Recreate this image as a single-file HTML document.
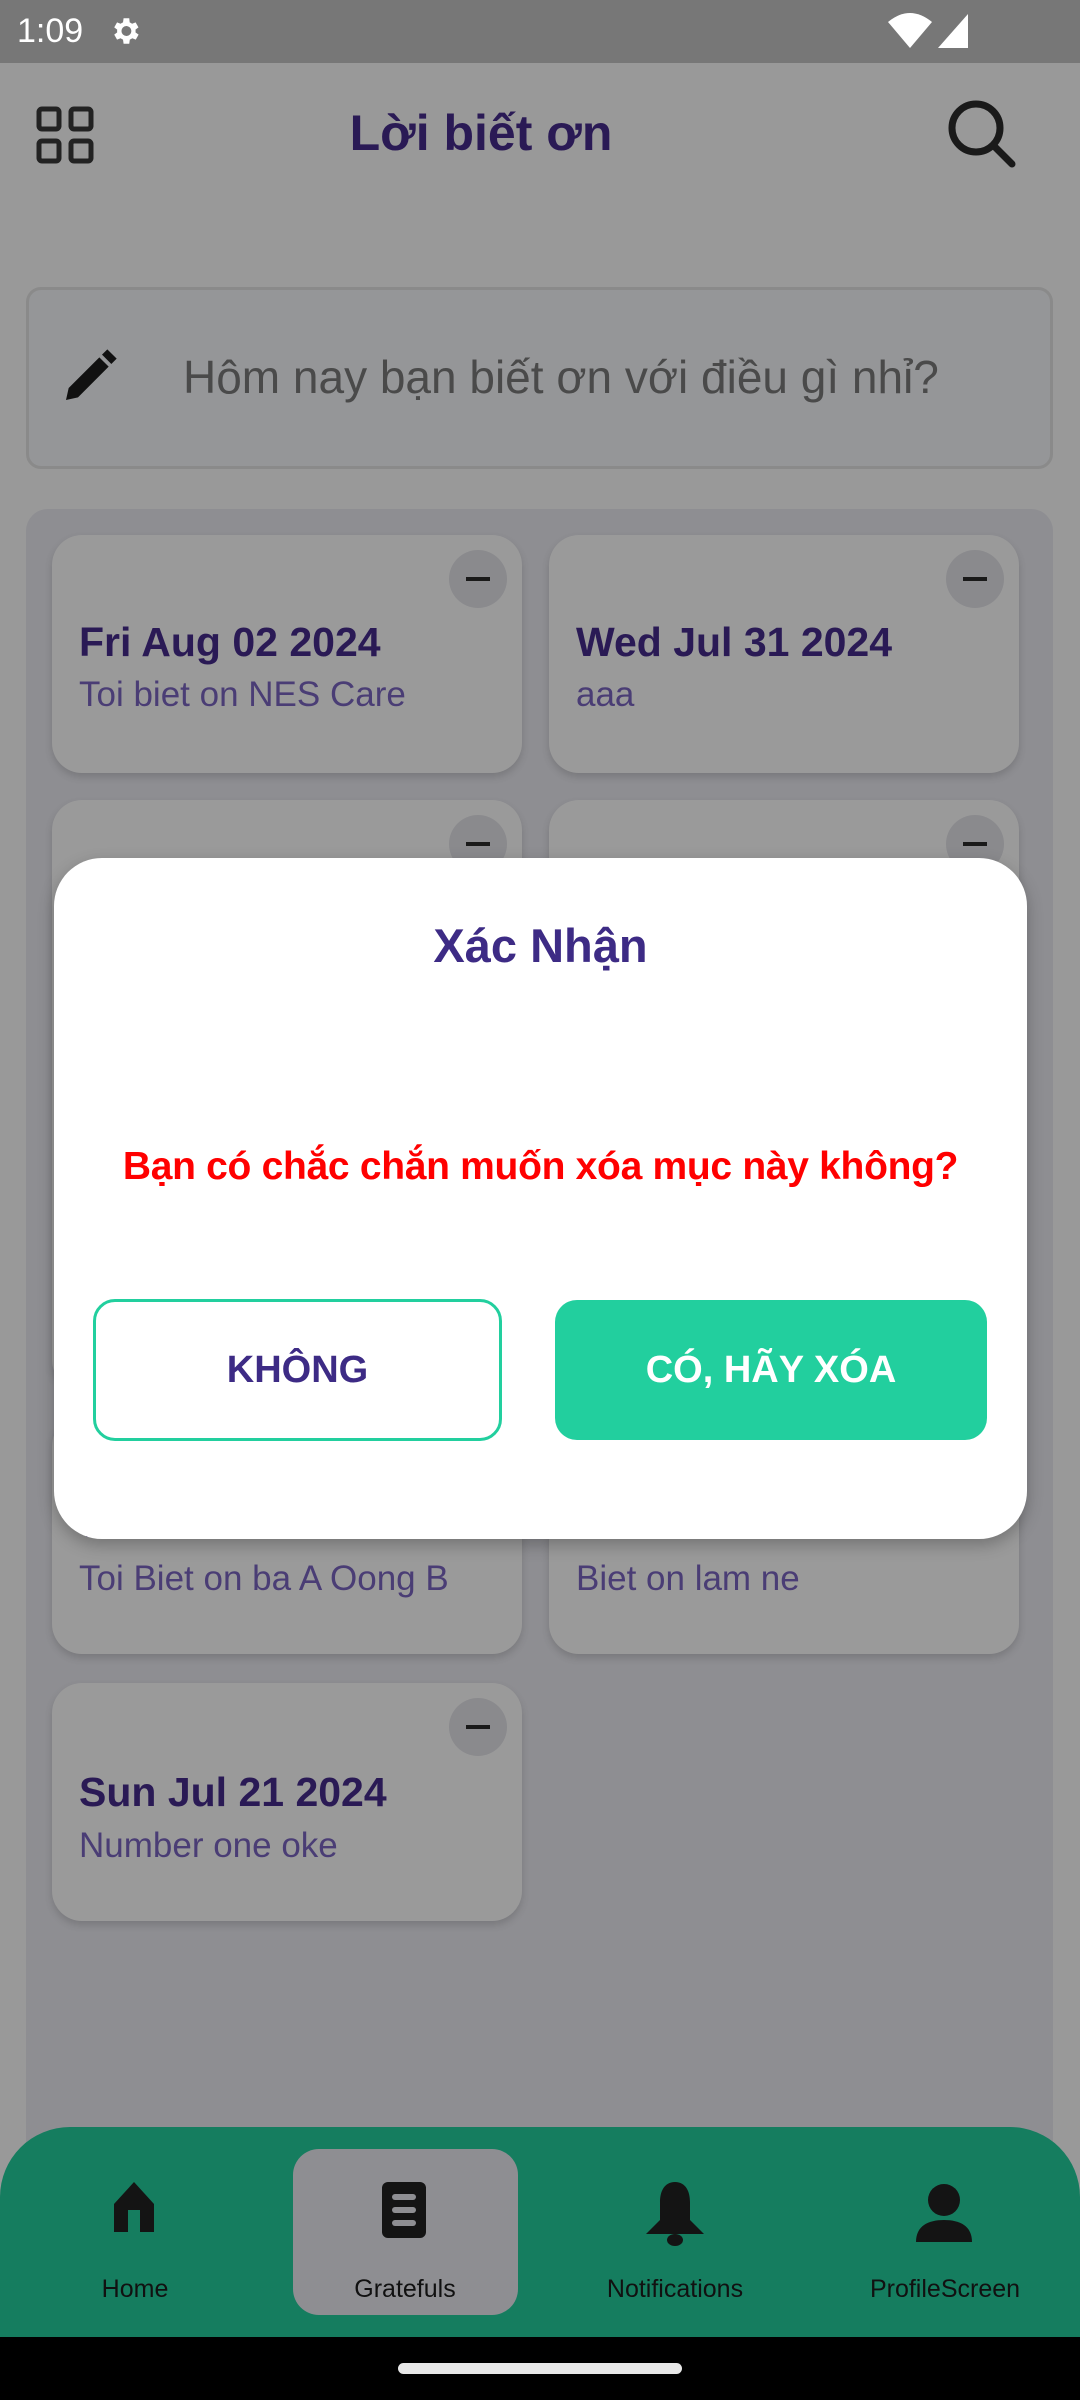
<!DOCTYPE html>
<html><head><meta charset="utf-8"><style>
*{margin:0;padding:0;box-sizing:border-box}
body{width:1080px;height:2400px;background:#999999;position:relative;overflow:hidden;font-family:"Liberation Sans","Noto Sans CJK SC",sans-serif}
.abs{position:absolute}
.card{position:absolute;background:#9a9a9a;border-radius:30px;box-shadow:0 4px 8px rgba(0,0,0,.15)}
.minus{position:absolute;right:15px;top:15px;width:58px;height:58px;border-radius:50%;background:#8a8a8d}
.minus:after{content:"";position:absolute;left:17px;top:27px;width:24px;height:4px;background:#1a1a1a}
.d{position:absolute;left:27px;font-weight:bold;font-size:41px;color:#2a1a55}
.s{position:absolute;left:27px;font-size:35px;color:#4a3d75}
.lab{position:absolute;top:2275px;font-size:25px;color:#111;width:270px;text-align:center}
</style></head><body>
<div class="abs" style="left:0;top:0;width:1080px;height:63px;background:#777"></div>
<div class="abs" style="left:17px;top:12px;font-size:34px;color:#fff">1:09</div>
<svg class="abs" style="left:108px;top:14px" width="34" height="34" viewBox="0 0 24 24"><path fill="#fff" d="M19.4 13a7.5 7.5 0 0 0 0-2l2.1-1.6-2-3.5-2.5 1a7 7 0 0 0-1.7-1L15 3h-4l-.4 2.9a7 7 0 0 0-1.7 1l-2.5-1-2 3.5L6.5 11a7.5 7.5 0 0 0 0 2l-2.1 1.6 2 3.5 2.5-1a7 7 0 0 0 1.7 1L11 21h4l.4-2.9a7 7 0 0 0 1.7-1l2.5 1 2-3.5zM13 15.5a3.5 3.5 0 1 1 0-7 3.5 3.5 0 0 1 0 7z"/></svg>
<svg class="abs" style="left:888px;top:12px" width="44" height="36" viewBox="0 0 44 36"><path fill="#fff" d="M0 10Q22-8 44 10L22 36z"/></svg>
<svg class="abs" style="left:938px;top:14px" width="30" height="34" viewBox="0 0 30 34"><path fill="#fff" d="M30 0V34H0z"/></svg>
<svg class="abs" style="left:36px;top:106px" width="60" height="60" viewBox="0 0 60 60" fill="none" stroke="#222" stroke-width="5"><rect x="3" y="3" width="20" height="20" rx="3"/><rect x="35" y="3" width="20" height="20" rx="3"/><rect x="3" y="35" width="20" height="20" rx="3"/><rect x="35" y="35" width="20" height="20" rx="3"/></svg>
<div class="abs" style="left:0;width:962px;top:104px;text-align:center;font-size:50px;font-weight:bold;color:#2a1a55">Lời biết ơn</div>
<svg class="abs" style="left:946px;top:98px" width="72" height="72" viewBox="0 0 72 72" fill="none" stroke="#1a1a1a" stroke-width="7"><circle cx="30" cy="30" r="24"/><path d="M48 48L66 66" stroke-linecap="round"/></svg>
<div class="abs" style="left:26px;top:287px;width:1027px;height:182px;background:#959698;border:3px solid #8a8a8a;border-radius:15px"></div>
<svg class="abs" style="left:58px;top:344px" width="64" height="64" viewBox="0 0 24 24"><path fill="#111" d="M3 21l1-4.5L15.5 5l3.5 3.5L7.5 20zM16.5 4l2-2 3.5 3.5-2 2z"/></svg>
<div class="abs" style="left:183px;top:350px;font-size:46px;color:#4a4a4a">Hôm nay bạn biết ơn với điều gì nhỉ?</div>
<div class="abs" style="left:26px;top:509px;width:1027px;height:1700px;background:#8e8e92;border-radius:22px"></div>
<div class="card" style="left:52px;top:535px;width:470px;height:238px"><div class="minus"></div><div class="d" style="top:84px">Fri Aug 02 2024</div><div class="s" style="top:140px">Toi biet on NES Care</div></div>
<div class="card" style="left:549px;top:535px;width:470px;height:238px"><div class="minus"></div><div class="d" style="top:84px">Wed Jul 31 2024</div><div class="s" style="top:140px">aaa</div></div>
<div class="card" style="left:52px;top:800px;width:470px;height:590px"><div class="minus"></div></div>
<div class="card" style="left:549px;top:800px;width:470px;height:590px"><div class="minus"></div></div>
<div class="card" style="left:52px;top:1416px;width:470px;height:238px"><div class="d" style="top:84px">Wed Jul 24 2024</div><div class="s" style="top:143px">Toi Biet on ba A Oong B</div></div>
<div class="card" style="left:549px;top:1416px;width:470px;height:238px"><div class="d" style="top:84px">Sun Jul 21 2024</div><div class="s" style="top:143px">Biet on lam ne</div></div>
<div class="card" style="left:52px;top:1683px;width:470px;height:238px"><div class="minus"></div><div class="d" style="top:86px">Sun Jul 21 2024</div><div class="s" style="top:143px">Number one oke</div></div>
<div class="abs" style="left:54px;top:858px;width:973px;height:681px;background:#fff;border-radius:48px;box-shadow:0 6px 16px rgba(0,0,0,.25)"></div>
<div class="abs" style="left:54px;width:973px;top:918px;text-align:center;font-size:47px;font-weight:bold;color:#3d2b85">Xác Nhận</div>
<div class="abs" style="left:54px;width:973px;top:1145px;text-align:center;font-size:39px;font-weight:bold;color:#ff0000;letter-spacing:-0.3px">Bạn có chắc chắn muốn xóa mục này không?</div>
<div class="abs" style="left:93px;top:1299px;width:409px;height:142px;border:3px solid #22cf9e;border-radius:22px;text-align:center;line-height:136px;font-size:38px;font-weight:bold;color:#3d2b85">KHÔNG</div>
<div class="abs" style="left:555px;top:1300px;width:432px;height:140px;background:#22cf9e;border-radius:22px;text-align:center;line-height:140px;font-size:38px;font-weight:bold;color:#fff">CÓ, HÃY XÓA</div>
<div class="abs" style="left:0;top:2127px;width:1080px;height:220px;background:#157d5f;border-radius:70px 70px 0 0"></div>
<div class="abs" style="left:293px;top:2149px;width:225px;height:166px;background:#8e8e92;border-radius:26px"></div>
<svg class="abs" style="left:110px;top:2180px" width="48" height="56" viewBox="0 0 48 56"><path fill="#141414" d="M24 2L4 24V52H18V30H30V52H44V24z"/><rect x="22" y="36" width="4" height="16" fill="#157d5f"/></svg>
<svg class="abs" style="left:380px;top:2180px" width="48" height="60" viewBox="0 0 48 60"><rect x="2" y="2" width="44" height="56" rx="6" fill="#141414"/><rect x="12" y="14" width="24" height="6" rx="3" fill="#8e8e92"/><rect x="12" y="27" width="24" height="6" rx="3" fill="#8e8e92"/><rect x="12" y="40" width="24" height="6" rx="3" fill="#8e8e92"/></svg>
<svg class="abs" style="left:644px;top:2180px" width="62" height="68" viewBox="0 0 62 68"><path fill="#141414" d="M31 2C20 2 16 12 16 22V40L2 54H60L46 40V22C46 12 42 2 31 2z"/><ellipse cx="31" cy="60" rx="8" ry="6" fill="#141414"/></svg>
<svg class="abs" style="left:914px;top:2184px" width="60" height="60" viewBox="0 0 60 60"><circle cx="30" cy="16" r="16" fill="#141414"/><path fill="#141414" d="M2 58C2 42 14 36 30 36S58 42 58 58z"/></svg>
<div class="lab" style="left:0">Home</div>
<div class="lab" style="left:270px">Gratefuls</div>
<div class="lab" style="left:540px">Notifications</div>
<div class="lab" style="left:810px">ProfileScreen</div>
<div class="abs" style="left:0;top:2337px;width:1080px;height:63px;background:#000"></div>
<div class="abs" style="left:398px;top:2363px;width:284px;height:11px;background:#e8e8e8;border-radius:6px"></div>
</body></html>
